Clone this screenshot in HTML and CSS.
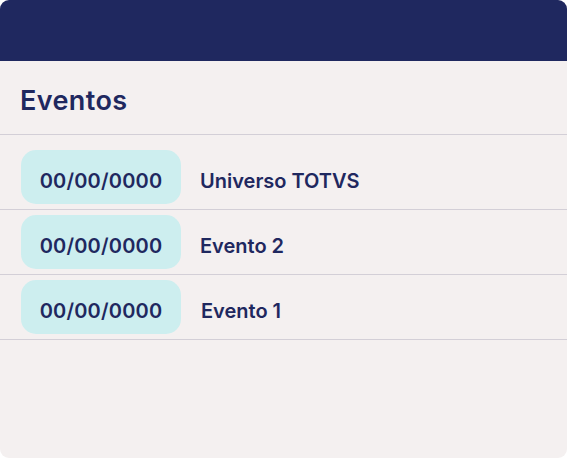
FILE: index.html
```html
<!DOCTYPE html>
<html lang="pt">
<head>
<meta charset="utf-8">
<link rel="stylesheet" href="styles.css">
</head>
<body>
<div class="card">
  <div class="card-header"></div>
  <h2 class="title">Eventos</h2>
  <ul class="events">
    <li class="event first"><span class="date">00/00/0000</span><span class="name">Universo TOTVS</span></li>
    <li class="event"><span class="date">00/00/0000</span><span class="name">Evento 2</span></li>
    <li class="event"><span class="date">00/00/0000</span><span class="name shift">Evento 1</span></li>
  </ul>
</div>
</body>
</html>
```

FILE: styles.css
```css
html, body { margin: 0; padding: 0; background: #ffffff; }
body { font-family: Inter, "Noto Sans", sans-serif; }
.card {
  width: 567px;
  height: 458px;
  background: #f4f0f0;
  border-radius: 9px;
  overflow: hidden;
  box-sizing: border-box;
}
.card-header { height: 61px; background: #1f285f; }
.title {
  margin: 0;
  padding: 24px 20px 0;
  height: 49px;
  font-size: 27px;
  font-weight: 600;
  color: #1f285f;
  line-height: 31px;
  border-bottom: 1px solid #d3cfd7;
  letter-spacing: 0.4px;
}
.events { list-style: none; margin: 0; padding: 0; }
.event {
  display: flex;
  align-items: center;
  padding: 5px 0 5px 21px;
  border-bottom: 1px solid #d3cfd7;
}
.event.first { padding-top: 15px; }
.date {
  width: 160px;
  height: 54px;
  box-sizing: border-box;
  padding-top: 7px;
  border-radius: 15px;
  background: #cdeeef;
  color: #1f285f;
  font-size: 20px;
  font-weight: 600;
  letter-spacing: 0.2px;
  display: flex;
  align-items: center;
  justify-content: center;
}
.name {
  margin-left: 19px;
  padding-top: 7px;
  color: #1f285f;
  font-size: 20px;
  font-weight: 600;
}
.name.shift { margin-left: 20px; }
```
